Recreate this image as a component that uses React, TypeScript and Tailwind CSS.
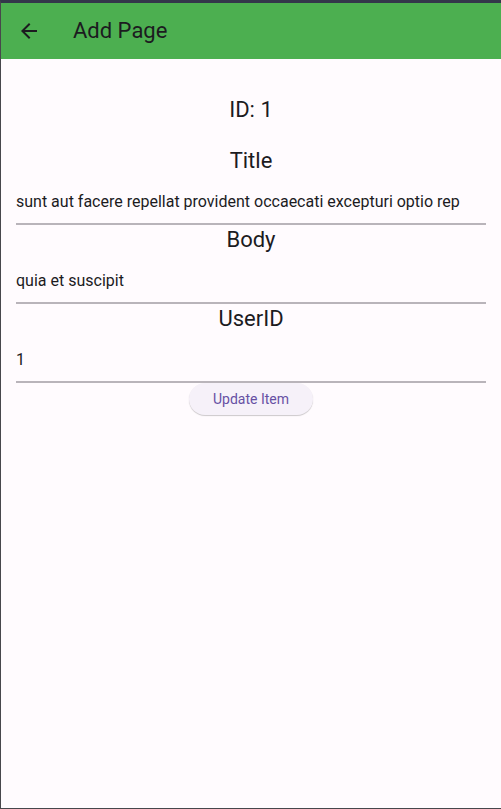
import React from "react";

type FieldProps = { id: string; label: string; value: string };

function Field({ id, label, value }: FieldProps) {
  return (
    <div className="flex flex-col">
      <label htmlFor={id} className="mb-[3px] text-center text-[22px] leading-[30px]">
        {label}
      </label>
      <input
        id={id}
        type="text"
        defaultValue={value}
        className="h-[46px] w-full rounded-none border-b-2 border-[#b9b4ba] bg-transparent text-base outline-none"
      />
    </div>
  );
}

export default function App() {
  return (
    <div className="flex min-h-screen flex-col border-t-3 border-b border-l border-t-[#33364a] border-b-[#48474c] border-l-[#48474c] bg-[#fffbfe] font-['Roboto',sans-serif] text-[#1c1b1f]">
      <header className="flex h-14 items-center bg-[#4caf50]">
        <button type="button" aria-label="Back" className="flex size-14 items-center justify-center">
          <svg viewBox="0 0 24 24" className="size-6" fill="currentColor" aria-hidden="true">
            <path d="M20 11H7.83l5.59-5.59L12 4l-8 8 8 8 1.41-1.41L7.83 13H20v-2z" />
          </svg>
        </button>
        <h1 className="ml-4 text-[22px] leading-[30px]">Add Page</h1>
      </header>
      <main className="flex flex-col px-[15px] pt-9">
        <h2 className="mb-[21px] text-center text-[22px] leading-[30px]">ID: 1</h2>
        <form className="flex flex-col">
          <Field id="title" label="Title" value="sunt aut facere repellat provident occaecati excepturi optio rep" />
          <Field id="body" label="Body" value="quia et suscipit" />
          <Field id="userId" label="UserID" value="1" />
          <button
            type="button"
            className="h-8 self-center rounded-full bg-[#f6f1f9] px-6 text-sm leading-5 text-[#6750a4] shadow-[0_1px_1px_rgba(0,0,0,0.2)]"
          >
            Update Item
          </button>
        </form>
      </main>
    </div>
  );
}
